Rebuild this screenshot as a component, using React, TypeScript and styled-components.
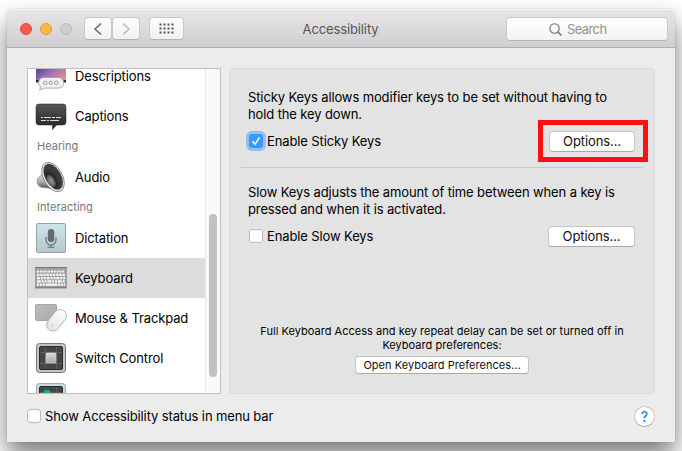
import React from "react";
import styled, { createGlobalStyle } from "styled-components";

const GlobalStyle = createGlobalStyle`
  * { box-sizing: border-box; }
  body {
    margin: 0;
    width: 682px;
    height: 451px;
    overflow: hidden;
    background: #fff;
    font-family: Inter, "Liberation Sans", sans-serif;
    font-size: 13px;
    letter-spacing: -0.12px;
    color: #000;
  }
`;

const Desktop = styled.div`
  width: 682px;
  height: 451px;
  overflow: hidden;
  padding: 9px 0 0 7px;
  background: #fff;
`;

const Window = styled.div`
  width: 668px;
  height: 433px;
  display: flex;
  flex-direction: column;
  background: #ececec;
  border-radius: 5px 5px 0 0;
  box-shadow: 0 0 1px rgba(0, 0, 0, 0.45), 0 14px 26px rgba(0, 0, 0, 0.52);
`;

const TitleBar = styled.header`
  height: 39px;
  flex: none;
  display: flex;
  align-items: center;
  padding: 1px 7px 0 13px;
  border-radius: 5px 5px 0 0;
  border-bottom: 1px solid #aeacae;
  background: linear-gradient(#e9e6e9, #d1ced1);
  box-shadow: inset 0 1px #f5f3f5;
`;

const Lights = styled.div`
  display: flex;
  gap: 8px;
  width: 64px;
`;

const Light = styled.span<{ $fill: string; $edge: string }>`
  width: 12px;
  height: 12px;
  border-radius: 50%;
  background: ${(p) => p.$fill};
  border: 1px solid ${(p) => p.$edge};
`;

const ToolButton = styled.button<{ $w: number }>`
  width: ${(p) => p.$w}px;
  height: 23px;
  padding: 0;
  display: flex;
  align-items: center;
  justify-content: center;
  border: 1px solid #c8c6c8;
  border-bottom-color: #b4b2b4;
  border-radius: 4px;
  background: linear-gradient(#fefefe, #f1f1f1);
`;

const NavGroup = styled.div`
  display: flex;
  margin-right: 9px;
`;

const Title = styled.h1`
  flex: 1;
  margin: 0;
  padding: 1px 9px 0 0;
  text-align: center;
  font-size: 13px;
  font-weight: 400;
  color: #555;
`;

const SearchField = styled.div`
  width: 162px;
  height: 24px;
  display: flex;
  align-items: center;
  padding: 1px 0 0 42px;
  gap: 5px;
  border: 1px solid #cbc9cb;
  border-bottom-color: #b4b2b4;
  border-radius: 4px;
  background: linear-gradient(#fff, #f3f3f3);
  color: #929292;
  letter-spacing: -0.6px;
`;

const Body = styled.main`
  flex: 1;
  min-height: 0;
  padding: 20px 20px 0;
`;

const Panes = styled.div`
  display: flex;
  gap: 8px;
  height: 326px;
`;

const Sidebar = styled.nav`
  width: 194px;
  display: flex;
  overflow: hidden;
  background: #fff;
  border: 1px solid #c0c0c0;
`;

const List = styled.div`
  flex: 1;
  margin-top: -13px;
`;

const Row = styled.div<{ $selected?: boolean }>`
  height: 40px;
  display: flex;
  align-items: center;
  gap: 8px;
  padding-left: 7px;
  white-space: nowrap;
  background: ${(p) => (p.$selected ? "#dcdcdc" : "transparent")};
  svg { flex: none; display: block; }
`;

const Section = styled.div`
  height: 21px;
  padding: 0 0 0 9px;
  font-size: 11px;
  line-height: 21px;
  letter-spacing: 0.04px;
  color: #777;
`;

const Track = styled.div`
  width: 15px;
  flex: none;
  border-left: 1px solid #e8e8e8;
  background: #fafafa;
  padding: 145px 0 0 3px;
`;

const Thumb = styled.div`
  width: 8px;
  height: 163px;
  border-radius: 4px;
  background: #c1c1c1;
`;

const Panel = styled.section`
  flex: 1;
  padding: 20px 11px 0;
  background: #e3e3e3;
  border: 1px solid #d9d9d9;
  border-radius: 4px;
`;

const Setting = styled.div`
  padding: 0 8px 0 7px;
`;

const Copy = styled.p`
  margin: 0;
  line-height: 17px;
  white-space: nowrap;
`;

const Controls = styled.div`
  display: flex;
  align-items: center;
  justify-content: space-between;
  height: 21px;
  margin-top: 8px;
  padding-left: 1px;
`;

const Check = styled.label`
  display: flex;
  align-items: center;
  gap: 4px;
  padding-bottom: 2px;
  white-space: nowrap;
`;

const Box = styled.span<{ $on?: boolean }>`
  width: 14px;
  height: 14px;
  display: flex;
  align-items: center;
  justify-content: center;
  border-radius: 3px;
  border: 1px solid ${(p) => (p.$on ? "#3a95f5" : "#b9b9b9")};
  background: ${(p) => (p.$on ? "#3c99fa" : "#fff")};
  box-shadow: ${(p) => (p.$on ? "0 0 0 3px #92c0ef" : "none")};
`;

const PushButton = styled.button<{ $w: number; $small?: boolean }>`
  width: ${(p) => p.$w}px;
  height: ${(p) => (p.$small ? 18 : 21)}px;
  padding: 0 0 1px;
  font-family: inherit;
  font-size: ${(p) => (p.$small ? 11 : 13)}px;
  letter-spacing: ${(p) => (p.$small ? 0.03 : -0.1)}px;
  color: #111;
  white-space: nowrap;
  background: #fff;
  border: 1px solid #c6c6c6;
  border-bottom-color: #aaa;
  border-radius: 4px;
`;

const Marked = styled.div`
  position: relative;
  height: 21px;
  &::after {
    content: "";
    position: absolute;
    inset: -11px -13px -10px -11px;
    border: 5px solid #ff0f14;
  }
`;

const Divider = styled.hr`
  height: 1px;
  border: 0;
  margin: 15px 0 16px;
  background: #c9c9c9;
`;

const Note = styled.div`
  margin-top: 77px;
  display: flex;
  flex-direction: column;
  align-items: center;
  text-align: center;
  font-size: 11px;
  line-height: 14px;
  letter-spacing: 0.03px;
  white-space: nowrap;
  gap: 4px;
`;

const Footer = styled.footer`
  display: flex;
  align-items: center;
  justify-content: space-between;
  height: 21px;
  margin-top: 12px;
`;

const Help = styled.button`
  width: 21px;
  height: 21px;
  padding: 0;
  border: 1px solid #c4c4c4;
  border-bottom-color: #aaa;
  border-radius: 50%;
  background: #fff;
  color: #1a82f7;
  font: 500 14px Inter, sans-serif;
`;

const DescriptionsIcon = () => (
  <svg width="32" height="32" viewBox="0 0 32 32">
    <defs>
      <linearGradient id="sunset" x1=".1" y1=".3" x2=".8" y2="1">
        <stop offset="0" stopColor="#4f448c" />
        <stop offset=".5" stopColor="#a074b8" />
        <stop offset="1" stopColor="#e8918c" />
      </linearGradient>
    </defs>
    <rect x="1" y="0" width="30" height="22" fill="url(#sunset)" />
    <path d="M1 20h30v2.500H1z" fill="#2f2540" />
    <path d="M8 17.500h15.500a5.300 5.300 0 0 1 0 10.600H9.500L4.500 30.200l1.400-3A5.300 5.300 0 0 1 8 17.500z" fill="#f1f1f1" stroke="#999" strokeWidth=".8" />
    <g fill="#fff" stroke="#888" strokeWidth=".9">
      <circle cx="10.300" cy="22.800" r="1.700" />
      <circle cx="15.800" cy="22.800" r="1.700" />
      <circle cx="21.300" cy="22.800" r="1.700" />
    </g>
  </svg>
);

const CaptionsIcon = () => (
  <svg width="32" height="32" viewBox="0 0 32 32">
    <defs>
      <linearGradient id="cap" x2="0" y2="1">
        <stop offset="0" stopColor="#555" />
        <stop offset="1" stopColor="#242424" />
      </linearGradient>
    </defs>
    <path d="M4 4h24a3 3 0 0 1 3 3v15a3 3 0 0 1-3 3h-6.500l-4 4.500V25H4a3 3 0 0 1-3-3V7a3 3 0 0 1 3-3z" fill="url(#cap)" stroke="#222" strokeWidth=".5" />
    <path d="M6 17.500h2m1 0h7m1 0h3m1 0h5M6 20.500h5m1 0h2m1 0h9" stroke="#ddd" strokeWidth="1" />
  </svg>
);

const AudioIcon = () => (
  <svg width="32" height="32" viewBox="0 0 32 32">
    <defs>
      <linearGradient id="metal" x2="0" y2="1">
        <stop offset="0" stopColor="#eee" />
        <stop offset=".6" stopColor="#aaa" />
        <stop offset="1" stopColor="#444" />
      </linearGradient>
      <radialGradient id="cone" cx=".25" cy=".6">
        <stop offset="0" stopColor="#929ba1" />
        <stop offset=".45" stopColor="#50575b" />
        <stop offset=".5" stopColor="#252525" />
        <stop offset="1" stopColor="#3c3c3c" />
      </radialGradient>
    </defs>
    <path d="M2.500 18C4 15 6 16 8 11l8 17c-4-2-6-.5-10-2-3-1-4.500-4-3.500-8z" fill="url(#metal)" stroke="#777" strokeWidth=".6" />
    <ellipse cx="18" cy="16" rx="9.500" ry="16" transform="rotate(-29 18 16)" fill="#ddd" stroke="#777" strokeWidth=".7" />
    <ellipse cx="18.300" cy="15.800" rx="7.900" ry="14" transform="rotate(-29 18 16)" fill="url(#cone)" />
  </svg>
);

const DictationIcon = () => (
  <svg width="32" height="32" viewBox="0 0 32 32">
    <defs>
      <linearGradient id="dict" x2="0" y2="1">
        <stop offset="0" stopColor="#cfe5e9" />
        <stop offset="1" stopColor="#b4c8ce" />
      </linearGradient>
    </defs>
    <rect x="1.500" y="1.500" width="29" height="29" rx="1.500" fill="url(#dict)" stroke="#92a5aa" />
    <rect x="12.800" y="7" width="6.500" height="13" rx="3.250" fill="#626b70" />
    <path d="M11 15v3a5 5 0 0 0 10 0v-3M16 23v2M12.500 25.200h7" fill="none" stroke="#626b70" strokeWidth="1.100" />
  </svg>
);

const KeyboardIcon = () => (
  <svg width="32" height="32" viewBox="0 0 32 32">
    <rect x="0" y="5" width="32" height="21" rx="1" fill="#a0a0a0" />
    <path d="M0 5.500h32" stroke="#777" />
    <path d="M0 25.800h32" stroke="#777" strokeWidth="1.200" />
    <g stroke="#f8f8f8" strokeWidth="2.200">
      <path d="M2 9.500h28" strokeDasharray="2 .8" />
      <path d="M2 12.800h28" strokeDasharray="2.300 .9" />
      <path d="M2 16.100h28" strokeDasharray="3 .9 2 .9 2 .9" />
      <path d="M2 19.400h28" strokeDasharray="3.800 .9 2 .9 2 .9" />
      <path d="M2 22.700h28" strokeDasharray="2.200 .8 2.200 .8 2.200 .8 11 .8" />
    </g>
  </svg>
);

const MouseIcon = () => (
  <svg width="32" height="32" viewBox="0 0 32 32">
    <defs>
      <linearGradient id="pad" x2="1" y2="1">
        <stop offset="0" stopColor="#bcbcbc" />
        <stop offset="1" stopColor="#a9a9a9" />
      </linearGradient>
      <linearGradient id="mouse" x2="0" y2="1">
        <stop offset="0" stopColor="#fff" />
        <stop offset="1" stopColor="#e3e3e3" />
      </linearGradient>
    </defs>
    <rect x=".5" y="2.500" width="21" height="16" rx="1" fill="url(#pad)" stroke="#999" strokeWidth=".8" />
    <rect x="15.200" y="6.300" width="12.600" height="24" rx="6.200" transform="rotate(38 21.500 18.300)" fill="url(#mouse)" stroke="#aaa" strokeWidth=".8" />
    <circle cx="17.500" cy="23.500" r=".9" fill="#ccc" />
  </svg>
);

const SwitchIcon = ({ scan = false }: { scan?: boolean }) => (
  <svg width="32" height="32" viewBox="0 0 32 32">
    <defs>
      <linearGradient id="knob" x2="0" y2="1">
        <stop offset="0" stopColor="#d8d8d8" />
        <stop offset="1" stopColor="#a6a6a6" />
      </linearGradient>
    </defs>
    <rect x="1.500" y="1.500" width="29" height="29" rx="3" fill={scan ? "#c5dce3" : "#c4c4c4"} stroke={scan ? "#95adb4" : "#777"} />
    <rect x="4.500" y="4.500" width="23" height="23" rx="1.500" fill="#454648" stroke="#2a2a2a" />
    <path d="M10.500 5v22M21.500 5v22M5 10.500h22M5 21.500h22" stroke="#5c5d5f" strokeWidth="1" />
    {scan ? (
      <circle cx="12" cy="12" r="4" fill="#10ba68" />
    ) : (
      <rect x="11" y="11" width="10" height="10" rx=".5" fill="url(#knob)" stroke="#ddd" strokeWidth=".6" />
    )}
  </svg>
);

const Chevron = ({ flip = false, color }: { flip?: boolean; color: string }) => (
  <svg width="10" height="14" viewBox="0 0 10 14">
    <path d={flip ? "M2 1.500 8 7l-6 5.500" : "M8 1.500 2 7l6 5.500"} fill="none" stroke={color} strokeWidth="1.500" />
  </svg>
);

const GridIcon = () => (
  <svg width="15" height="11" viewBox="0 0 15 11">
    {[0, 4, 8].map((y) =>
      [0, 4, 8, 12].map((x) => <rect key={`${x}-${y}`} x={x + 0.5} y={y + 0.5} width="2" height="2" fill="#555" />)
    )}
  </svg>
);

const SearchIcon = () => (
  <svg width="13" height="13" viewBox="0 0 13 13" fill="none" stroke="#6c6c6c" strokeWidth="1.100">
    <circle cx="5.500" cy="5.500" r="4.700" />
    <path d="m9 9 3.500 3.500" strokeWidth="1.400" />
  </svg>
);

const Tick = () => (
  <svg width="10" height="10" viewBox="0 0 10 10">
    <path d="M1.500 5.300 4 8.300 8.500 1.300" fill="none" stroke="#fff" strokeWidth="1.500" />
  </svg>
);

export default function App() {
  return (
    <Desktop>
      <GlobalStyle />
      <Window>
        <TitleBar>
          <Lights>
            <Light $fill="#fd5754" $edge="#e54643" />
            <Light $fill="#fdb844" $edge="#dd9b35" />
            <Light $fill="#cfcdcf" $edge="#b9b7b9" />
          </Lights>
          <NavGroup>
            <ToolButton $w={28}><Chevron color="#666" /></ToolButton>
            <ToolButton $w={28}><Chevron flip color="#bbb" /></ToolButton>
          </NavGroup>
          <ToolButton $w={35}><GridIcon /></ToolButton>
          <Title>Accessibility</Title>
          <SearchField><SearchIcon />Search</SearchField>
        </TitleBar>
        <Body>
          <Panes>
            <Sidebar>
              <List>
                <Row><DescriptionsIcon />Descriptions</Row>
                <Row><CaptionsIcon />Captions</Row>
                <Section>Hearing</Section>
                <Row><AudioIcon />Audio</Row>
                <Section>Interacting</Section>
                <Row><DictationIcon />Dictation</Row>
                <Row $selected><KeyboardIcon />Keyboard</Row>
                <Row><MouseIcon />Mouse &amp; Trackpad</Row>
                <Row><SwitchIcon />Switch Control</Row>
                <Row><SwitchIcon scan /></Row>
              </List>
              <Track><Thumb /></Track>
            </Sidebar>
            <Panel>
              <Setting>
                <Copy>Sticky Keys allows modifier keys to be set without having to<br />hold the key down.</Copy>
                <Controls>
                  <Check><Box $on><Tick /></Box>Enable Sticky Keys</Check>
                  <Marked><PushButton $w={86}>Options...</PushButton></Marked>
                </Controls>
              </Setting>
              <Divider />
              <Setting>
                <Copy>Slow Keys adjusts the amount of time between when a key is<br />pressed and when it is activated.</Copy>
                <Controls>
                  <Check><Box />Enable Slow Keys</Check>
                  <PushButton $w={87}>Options...</PushButton>
                </Controls>
              </Setting>
              <Note>
                <span>Full Keyboard Access and key repeat delay can be set or turned off in<br />Keyboard preferences:</span>
                <PushButton $w={174} $small>Open Keyboard Preferences...</PushButton>
              </Note>
            </Panel>
          </Panes>
          <Footer>
            <Check><Box />Show Accessibility status in menu bar</Check>
            <Help>?</Help>
          </Footer>
        </Body>
      </Window>
    </Desktop>
  );
}
